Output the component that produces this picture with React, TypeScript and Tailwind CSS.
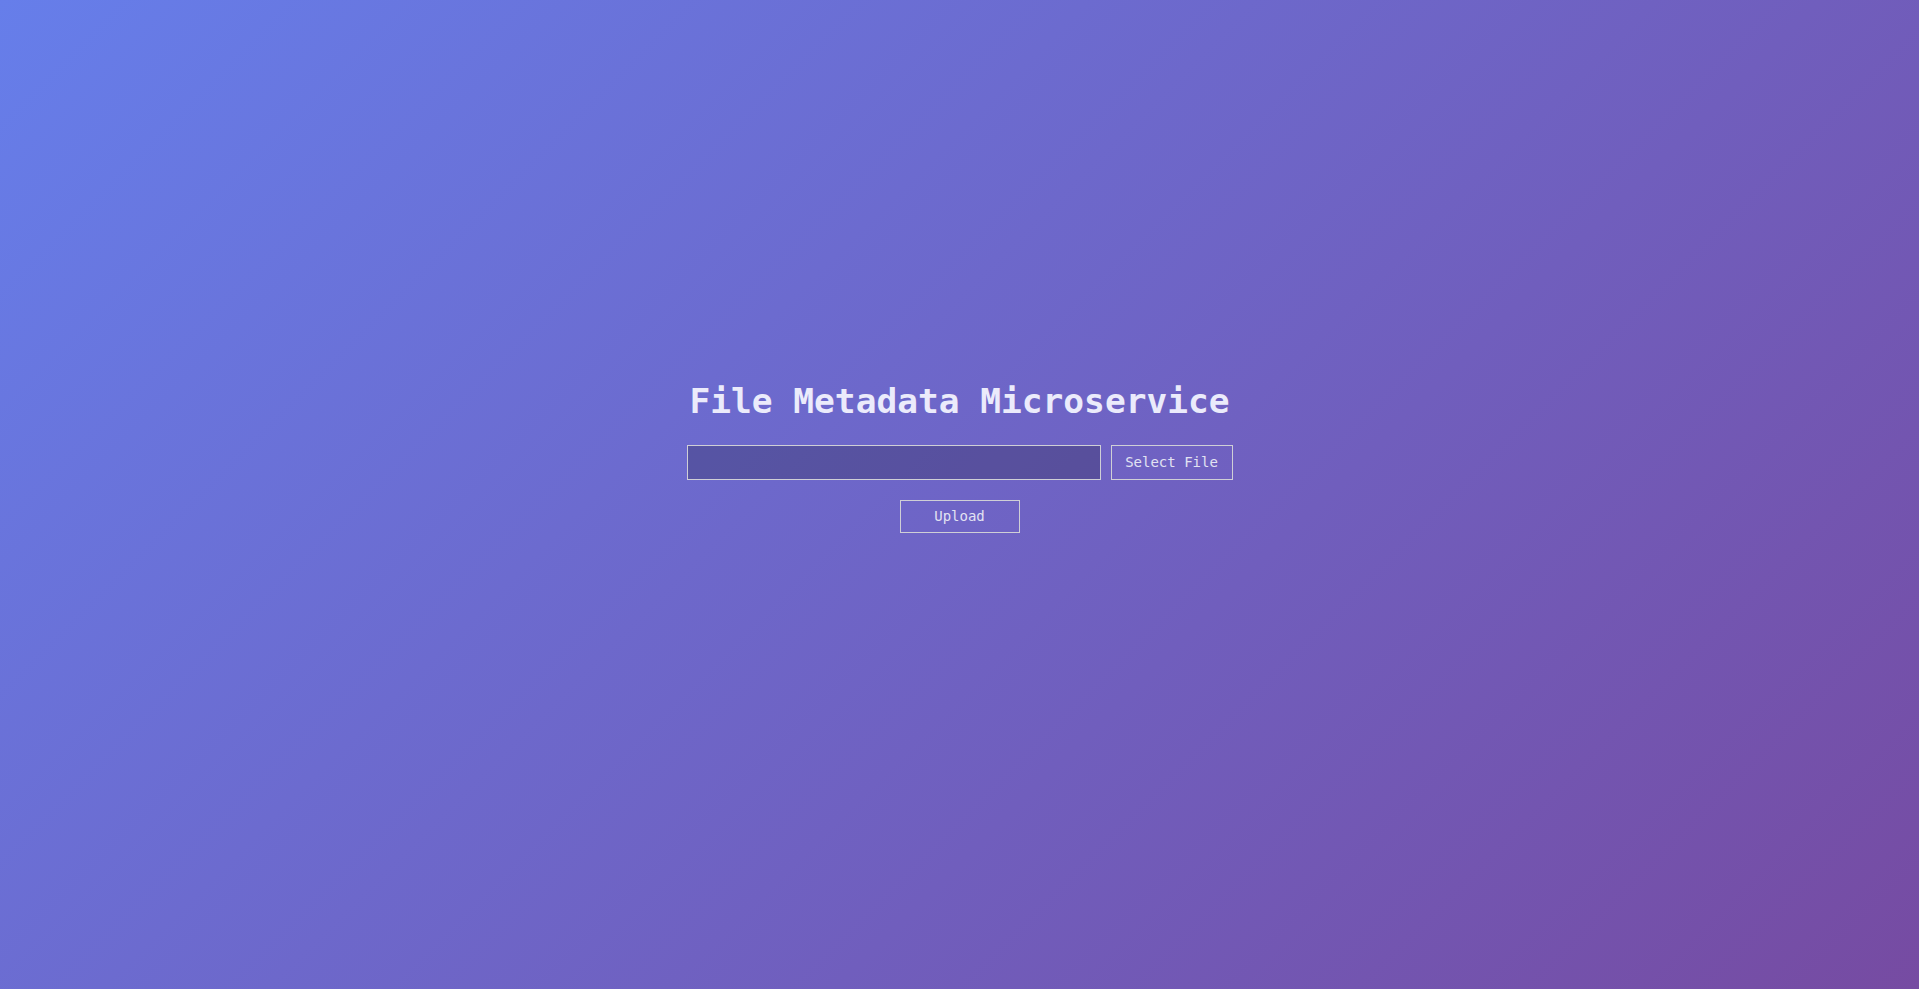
import { useRef, useState } from 'react';

export default function App() {
    const fileRef = useRef<HTMLInputElement>(null);
    const [fileName, setFileName] = useState('');

    return (
        <div
            className="min-h-screen w-full flex flex-col items-center justify-center pb-[72px] bg-[linear-gradient(135deg,#667eea_0%,#764ba2_100%)]"
            style={{ fontFamily: '"DejaVu Sans Mono", "Liberation Mono", monospace' }}
        >
            <h1 className="text-[34.5px] leading-none font-bold text-[#ebebfb] tracking-normal">
                File Metadata Microservice
            </h1>

            <form className="flex flex-col items-center mt-[26px]" onSubmit={(e) => e.preventDefault()}>
                <div className="flex items-center gap-[10px]">
                    <input
                        type="text"
                        readOnly
                        value={fileName}
                        className="w-[414px] h-[35px] bg-black/20 border border-[#cfcfd6] outline-none px-3 text-sm text-white"
                    />
                    <input
                        ref={fileRef}
                        type="file"
                        className="hidden"
                        onChange={(e) => setFileName(e.target.files?.[0]?.name ?? '')}
                    />
                    <button
                        type="button"
                        onClick={() => fileRef.current?.click()}
                        className="w-[122px] h-[35px] border border-[#cfcfd6] bg-transparent text-[14px] text-[#e2e2f2]"
                    >
                        Select File
                    </button>
                </div>

                <button
                    type="submit"
                    className="mt-[20px] w-[120px] h-[33px] border border-[#cfcfd6] bg-transparent text-[14px] text-[#e2e2f2]"
                >
                    Upload
                </button>
            </form>
        </div>
    );
}
